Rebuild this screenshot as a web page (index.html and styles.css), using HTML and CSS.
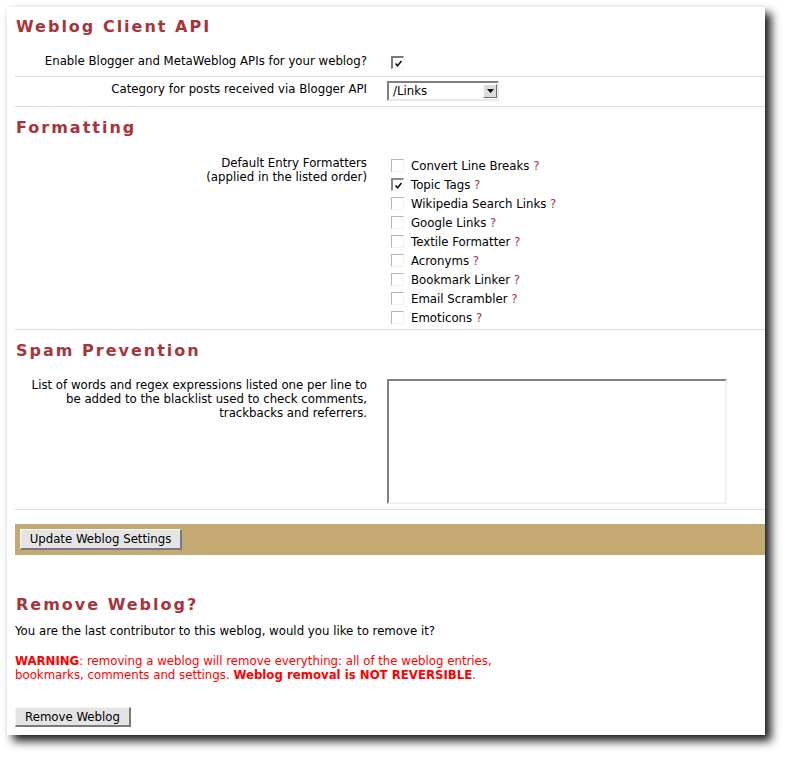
FILE: index.html
```html
<!DOCTYPE html>
<html>
<head>
<meta charset="utf-8">
<title>Weblog Settings</title>
<link rel="stylesheet" href="styles.css">
</head>
<body>
<div class="window">
  <h2 class="sec-title first">Weblog Client API</h2>
  <div class="row row-check">
    <div class="label">Enable Blogger and MetaWeblog APIs for your weblog?</div>
    <div class="field"><span class="cb checked"><svg viewBox="0 0 9 9" width="9" height="9"><path d="M1.5 4.5 L3.5 6.8 L7.5 2" fill="none" stroke="#000" stroke-width="1.4"/></svg></span></div>
  </div>
  <div class="row row-select">
    <div class="label">Category for posts received via Blogger API</div>
    <div class="field">
      <div class="select"><span class="sel-text">/Links</span><span class="sel-btn"><svg viewBox="0 0 7 4" width="7" height="4"><path d="M0 0 H7 L3.5 4 Z" fill="#000"/></svg></span></div>
    </div>
  </div>

  <h2 class="sec-title">Formatting</h2>
  <div class="row row-format">
    <div class="label">Default Entry Formatters<br>(applied in the listed order)</div>
    <div class="field">
      <ul class="cb-list">
        <li><span class="cb"></span>Convert Line Breaks&nbsp;<a class="help">?</a></li>
        <li><span class="cb checked"><svg viewBox="0 0 9 9" width="9" height="9"><path d="M1.5 4.5 L3.5 6.8 L7.5 2" fill="none" stroke="#000" stroke-width="1.4"/></svg></span>Topic Tags&nbsp;<a class="help">?</a></li>
        <li><span class="cb"></span>Wikipedia Search Links&nbsp;<a class="help">?</a></li>
        <li><span class="cb"></span>Google Links&nbsp;<a class="help">?</a></li>
        <li><span class="cb"></span>Textile Formatter&nbsp;<a class="help">?</a></li>
        <li><span class="cb"></span>Acronyms&nbsp;<a class="help">?</a></li>
        <li><span class="cb"></span>Bookmark Linker&nbsp;<a class="help">?</a></li>
        <li><span class="cb"></span>Email Scrambler&nbsp;<a class="help">?</a></li>
        <li><span class="cb"></span>Emoticons&nbsp;<a class="help">?</a></li>
      </ul>
    </div>
  </div>

  <h2 class="sec-title">Spam Prevention</h2>
  <div class="row row-spam">
    <div class="label">List of words and regex expressions listed one per line to be added to the blacklist used to check comments, trackbacks and referrers.</div>
    <div class="field"><div class="textarea"></div></div>
  </div>

  <div class="control-bar"><button class="btn">Update Weblog Settings</button></div>

  <h2 class="sec-title remove-title">Remove Weblog?</h2>
  <p class="note">You are the last contributor to this weblog, would you like to remove it?</p>
  <p class="warning"><b>WARNING</b>: removing a weblog will remove everything: all of the weblog entries,<br>bookmarks, comments and settings. <b>Weblog removal is NOT REVERSIBLE</b>.</p>
  <button class="btn btn-remove">Remove Weblog</button>
</div>
</body>
</html>
```

FILE: styles.css
```css
html, body {
  margin: 0;
  padding: 0;
  background: #ffffff;
  height: 100%;
}

body {
  font-family: "DejaVu Sans", "Noto Sans", sans-serif;
  font-size: 11.75px;
  color: #000;
}

.window {
  margin: 7px 0 0 7px;
  width: 758px;
  height: 728px;
  padding-left: 8px;
  background: #fff;
  box-sizing: border-box;
  box-shadow: 6px 6px 9px rgba(0, 0, 0, 0.9), 0 0 4px rgba(0, 0, 0, 0.06);
  overflow: hidden;
}

.sec-title {
  margin: 10px 0 12px 1px;
  font-size: 16px;
  line-height: 22px;
  font-weight: bold;
  letter-spacing: 2px;
  color: #a8343b;
}

.sec-title.first {
  margin-top: 0;
  padding-top: 9px;
}

.row {
  display: grid;
  grid-template-columns: 352px 1fr;
  column-gap: 20px;
  border-bottom: 1px solid #dcdcdc;
}

.label {
  text-align: right;
  line-height: 14px;
}

.row-check {
  height: 26px;
}
.row-check .label { padding-top: 4px; }
.row-check .field { padding-top: 6px; padding-left: 4px; }

.row-select {
  height: 29px;
}
.row-select .label { padding-top: 5px; }
.row-select .field { padding-top: 4px; }

.row-format .label { padding-top: 5px; }

.row-spam .label { padding-top: 4px; }
.row-spam .field { padding-top: 5px; padding-bottom: 5px; }

.cb {
  display: inline-flex;
  align-items: center;
  justify-content: center;
  width: 13px;
  height: 13px;
  box-sizing: border-box;
  border-top: 1px solid #8a8a8a;
  border-left: 1px solid #8a8a8a;
  border-right: 1px solid #f2f2f2;
  border-bottom: 1px solid #f2f2f2;
  background: #fff;
  vertical-align: top;
  flex: none;
}
.cb.checked {
  border-top: 2px solid #7a7a7a;
  border-left: 2px solid #7a7a7a;
}

.cb-list {
  list-style: none;
  margin: 0;
  padding: 8px 0 0 4px;
}
.cb-list li {
  height: 19px;
  line-height: 14px;
  display: flex;
  align-items: flex-start;
}
.cb-list li:last-child {
  height: 18px;
}
.cb-list li .cb {
  margin-right: 7px;
  border-top-color: #b5b5b5;
  border-left-color: #b5b5b5;
}
.cb-list li .cb.checked {
  border-top-color: #8a8a8a;
  border-left-color: #8a8a8a;
}
.help {
  color: #a8343b;
}

.select {
  width: 112px;
  height: 20px;
  box-sizing: border-box;
  border-top: 2px solid #808080;
  border-left: 2px solid #808080;
  border-right: 2px solid #e8e8e8;
  border-bottom: 2px solid #e8e8e8;
  display: flex;
  align-items: center;
  justify-content: space-between;
  background: #fff;
}
.sel-text {
  padding-left: 4px;
}
.sel-btn {
  width: 14px;
  height: 14px;
  box-sizing: border-box;
  background: #dcdcdc;
  border-top: 1px solid #fff;
  border-left: 1px solid #fff;
  border-right: 1px solid #707070;
  border-bottom: 1px solid #707070;
  display: flex;
  align-items: center;
  justify-content: center;
}

.textarea {
  width: 340px;
  height: 125px;
  box-sizing: border-box;
  border-top: 2px solid #808080;
  border-left: 2px solid #808080;
  border-right: 2px solid #f0f0f0;
  border-bottom: 2px solid #f0f0f0;
  background: #fff;
}

.control-bar {
  margin-top: 14px;
  background: #c4a973;
  height: 31px;
  box-sizing: border-box;
  padding: 5px 0 0 5px;
}

.btn {
  font-family: "DejaVu Sans", "Noto Sans", sans-serif;
  font-size: 11.75px;
  color: #000;
  background: #e4e4e4;
  border-top: 1px solid #fafafa;
  border-left: 1px solid #fafafa;
  border-right: 2px solid #7a7a7a;
  border-bottom: 2px solid #7a7a7a;
  height: 21px;
  padding: 0;
  margin: 0;
  display: block;
}
.control-bar .btn {
  width: 162px;
}

.remove-title {
  margin-top: 39px;
  margin-bottom: 8px;
}

.note {
  margin: 0;
  line-height: 14px;
}

.warning {
  margin: 16px 0 0 0;
  line-height: 14px;
  color: #ff0000;
}

.btn-remove {
  margin-top: 25px;
  width: 116px;
  height: 20px;
  border-top-color: #f4f4f4;
  border-left-color: #f4f4f4;
}
```
